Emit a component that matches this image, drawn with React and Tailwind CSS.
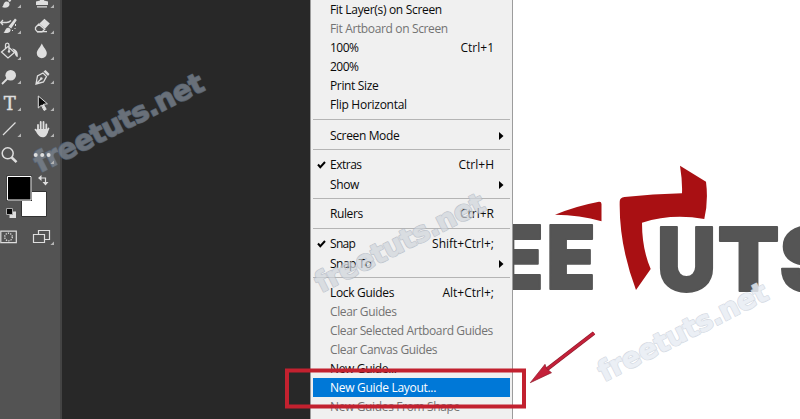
const INK = '#dedede';

function Tool({ box, corner, children }) {
  const [x, y, w, h] = box;
  return (
    <svg width={w} height={h} viewBox={`${x} ${y} ${w} ${h}`} fill={INK} className="block">
      {children}
      {corner && <path d={`M${corner[0]} ${corner[1]}v-3.6l-3.6 3.6z`} fill="#b5b5b5" />}
    </svg>
  );
}

function Toolbar() {
  return (
    <aside className="h-[419px] w-[62px] shrink-0 overflow-hidden border-r-2 border-[#444444] bg-[#535353]">
      <div className="-mt-3 grid grid-cols-[26px_34px]">
        <Tool box={[0, -12, 26, 26]} corner={[21, 8]}>
          <path d="M2 7c2-1 1-5 4.500-5.500 3 0 4 3 2 5C7 8 4 8 2 7zM8 1l4-6 2 1-4 6z" />
        </Tool>
        <Tool box={[26, -12, 34, 26]} corner={[54, 8]}>
          <path d="M36 5V1.500l4-1V-4h4v4.500l4 1V5zM37 6.200h10v1.300H37z" />
        </Tool>
        <Tool box={[0, 14, 26, 26]} corner={[21, 34]}>
          <path d="M3.500 32.500c2-1 1.500-4.500 4.500-4.800 2.500 0 3.500 2.700 1.700 4.200-1.700 1.400-4.200 1.400-6.200.6zM8.500 26.500l6.500-8 1.800 1.400-5.600 8.700z" />
          <path d="M1 22.500h5.500c2 0 3.500-1 4.500-2M3 20l-2.300 2.500L3 25" fill="none" stroke={INK} strokeWidth="1.300" />
          <path d="M15.500 24v2m-.5 2v1m-2 1.500h-1" stroke={INK} fill="none" />
        </Tool>
        <Tool box={[26, 14, 34, 26]} corner={[54, 34]}>
          <path d="M35.500 27.500l3.200-3.300 6 5-2.700 2.700h-4.500l-2-2.300z" fill="#535353" stroke={INK} strokeWidth="1.300" />
          <path d="M39.200 23.800l5.200-5 5.400 4.700-4.800 5.200zM37 31h10v1.200H37z" />
        </Tool>
        <Tool box={[0, 40, 26, 26]} corner={[21, 60]}>
          <path d="M1.500 52l6.500-5.500 6.500 6L8 58zM5.500 49v-4c0-2.500 3.500-2.500 3.500 0v6.500" fill="none" stroke={INK} strokeWidth="1.300" />
          <circle cx="9" cy="51.500" r="1.200" />
          <path d="M12 48.500c4 .5 6.500 3 5.700 8.500-3-.5-2.800-4.500-3.700-6z" />
        </Tool>
        <Tool box={[26, 40, 34, 26]} corner={[54, 60]}>
          <path d="M41.800 43.500c2 4.500 5 6.500 5 9.800a5 5 0 0 1-10 0c0-3.300 3-5.300 5-9.800z" />
        </Tool>
        <Tool box={[0, 66, 26, 26]} corner={[21, 84]}>
          <circle cx="10.700" cy="75.300" r="5.300" />
          <path d="M7.500 78.500L2 84" stroke={INK} strokeWidth="1.800" />
        </Tool>
        <Tool box={[26, 66, 34, 26]} corner={[54, 84]}>
          <path d="M36 84l1.500-8 5.500-3 3.500 3.500-3 5.500zM36 84l5-5" fill="none" stroke={INK} strokeWidth="1.300" />
          <circle cx="41.300" cy="78.500" r="1.300" />
          <path d="M43.500 71.500l2-1.500 4 4-1.500 2z" />
        </Tool>
        <Tool box={[0, 92, 26, 26]} corner={[21, 111]}>
          <text x="9.700" y="109.500" textAnchor="middle" fontSize="18" textLength="12" lengthAdjust="spacingAndGlyphs" fontFamily="DejaVu Serif, serif" stroke={INK} strokeWidth=".5">T</text>
        </Tool>
        <Tool box={[26, 92, 34, 26]} corner={[54, 111]}>
          <path d="M38.300 96v12l3-2.800 2.700 5.300 2.200-1.200-2.800-5 4-.5z" fill="#0c0c0c" stroke={INK} strokeWidth="1" />
          <path d="M41.600 105.200l2.500 5.300 2.200-1.200-2.700-5z" />
        </Tool>
        <Tool box={[0, 118, 26, 26]} corner={[21, 137]}>
          <path d="M3 135L15.500 122.500" stroke={INK} strokeWidth="1.300" />
        </Tool>
        <Tool box={[26, 118, 34, 26]} corner={[54, 137]}>
          <path d="M38 131v-6M40.700 130v-8M43.500 130v-8M46.300 131v-6.500M38.500 133l-3-3.300M46.500 133l2-4.500" stroke={INK} strokeWidth="1.800" strokeLinecap="round" />
          <path d="M37.200 129h10l1 2c-1 3-2 6-4.700 6.300-3.500.3-5-1.800-7-4.800z" />
        </Tool>
        <Tool box={[0, 144, 26, 26]}>
          <circle cx="7.700" cy="153.300" r="5.500" fill="none" stroke={INK} strokeWidth="1.500" />
          <path d="M11.700 157.500l4.800 4.700" stroke={INK} strokeWidth="2.500" />
        </Tool>
        <div className="relative z-10">
          <Tool box={[26, 144, 34, 26]} corner={[54, 164]}>
            <circle cx="35.700" cy="155" r="2" />
            <circle cx="42.200" cy="155" r="2" />
            <circle cx="48.600" cy="155" r="2" />
          </Tool>
        </div>
      </div>
      <Tool box={[0, 170, 60, 54]}>
        <path d="M21.500 191.500h25v25h-25z" fill="#ffffff" stroke="#333333" />
        <path d="M6.500 175.500h25.500v25.500H6.500z" fill="#303030" />
        <path d="M7.500 176.500h23.500v23.500H7.500z" fill="#000000" stroke="#ffffff" />
        <path d="M41 178h4.500v5" stroke={INK} strokeWidth="1.200" fill="none" />
        <path d="M41.500 175l-3.500 3 3.500 3zM42.500 182l3 3.500 3-3.500z" />
        <path d="M9.500 211.500h6.500v6.500H9.500z" />
        <path d="M6.500 208.500h6v6h-6z" fill="#080808" stroke="#aaaaaa" />
      </Tool>
      <div className="grid grid-cols-[26px_34px]">
        <Tool box={[0, 224, 26, 26]}>
          <path d="M.8 231.200h15.500v11.500H.8z" fill="none" stroke={INK} strokeWidth="1.200" />
          <circle cx="8.500" cy="237" r="3.800" fill="none" stroke={INK} strokeDasharray="1.300 1.100" strokeWidth="1.300" />
        </Tool>
        <Tool box={[26, 224, 34, 26]} corner={[54, 245]}>
          <path d="M38.500 230.500h11v9h-11z" fill="#535353" stroke={INK} strokeWidth="1.200" />
          <path d="M33.500 234.500h11v8h-11z" fill="#535353" stroke={INK} strokeWidth="1.200" />
        </Tool>
      </div>
    </aside>
  );
}

function Item({ label, keys, sub, checked, off, active, track = 'tracking-[-0.36px]' }) {
  const tone = active ? 'bg-[#0078d7] text-white' : off ? 'text-[#737373]' : 'text-[#0a0a0a]';
  return (
    <div className={`mx-[2px] flex h-[19px] items-center pr-[16px] leading-[19px] ${tone}`}>
      <span className="flex w-[17px] shrink-0 justify-center pr-[1px]">
        {checked && (
          <svg width="9" height="8" viewBox="0 0 9 8" fill="none" stroke="#000" strokeWidth="2">
            <path d="M1 3.500l2.300 2.700L8 1" />
          </svg>
        )}
      </span>
      <span className={`whitespace-nowrap ${track}`}>{label}</span>
      {keys && <span className="ml-auto">{keys}</span>}
      {sub && (
        <svg className="-mr-[10px] ml-auto" width="5" height="8" viewBox="0 0 5 8">
          <path d="M0 0l4.500 4L0 8z" />
        </svg>
      )}
    </div>
  );
}

function Rule({ space }) {
  return <div className={`mx-[2px] h-px bg-[#b4b4b4] ${space}`} />;
}

function Menu() {
  return (
    <nav className="h-[419px] w-[203px] shrink-0 overflow-hidden border-x border-[#9c9c9c] bg-[#f0f0f0] font-['Open_Sans','Noto_Sans',sans-serif] text-[12px]">
      <Item label="Fit Layer(s) on Screen" track="tracking-[-0.32px]" />
      <Item label="Fit Artboard on Screen" off />
      <Item label="100%" keys="Ctrl+1" track="tracking-[-0.5px]" />
      <Item label="200%" track="tracking-[-0.5px]" />
      <Item label="Print Size" />
      <Item label="Flip Horizontal" track="tracking-[-0.27px]" />
      <Rule space="mt-[5px] mb-[6px]" />
      <Item label="Screen Mode" sub />
      <Rule space="mt-[4px] mb-[5px]" />
      <Item label="Extras" keys="Ctrl+H" checked track="tracking-[-0.5px]" />
      <div className="h-px" />
      <Item label="Show" sub track="tracking-[-0.4px]" />
      <Rule space="mt-[4px] mb-[5px]" />
      <Item label="Rulers" keys="Ctrl+R" track="tracking-[-0.4px]" />
      <Rule space="mt-[5px] mb-[5px]" />
      <Item label="Snap" keys="Shift+Ctrl+;" checked track="tracking-[-0.7px]" />
      <div className="h-px" />
      <Item label="Snap To" sub track="tracking-[-0.5px]" />
      <Rule space="mt-[4px] mb-[5px]" />
      <Item label="Lock Guides" keys="Alt+Ctrl+;" track="tracking-[-0.32px]" />
      <Item label="Clear Guides" off />
      <Item label="Clear Selected Artboard Guides" off track="tracking-[-0.39px]" />
      <Item label="Clear Canvas Guides" off />
      <Item label="New Guide..." track="tracking-[-0.35px]" />
      <Item label="New Guide Layout..." active track="tracking-[-0.3px]" />
      <Item label="New Guides From Shape" off />
    </nav>
  );
}

function Logo() {
  return (
    <svg className="block" width="287" height="419" viewBox="513 0 287 419">
      <g fill="#555555" stroke="#555555" strokeWidth="2" strokeLinejoin="round" fontFamily="Inter, sans-serif" fontWeight="900" fontSize="88">
        <text x="493.500" y="289" textLength="50" lengthAdjust="spacingAndGlyphs">E</text>
        <text x="546.500" y="289" textLength="49" lengthAdjust="spacingAndGlyphs">E</text>
        <text x="657" y="290.500" textLength="59" lengthAdjust="spacingAndGlyphs">U</text>
        <text x="717.500" y="290.500" textLength="62" lengthAdjust="spacingAndGlyphs">T</text>
        <text x="779.500" y="290.500" textLength="60" lengthAdjust="spacingAndGlyphs">S</text>
      </g>
      <path d="M680 165.700L706 181.700Q708.500 201 704.300 219Q672 213 642 222.700Q642 249 650.700 269L636 290Q619 245 619.700 201.700Q619.700 197.500 624.500 197Q653 194 682 193.300Q682.500 181 680 165.700z" fill="#a91013" />
      <path d="M555 214.700Q576 206 599 201.700Q601.500 201.500 601.500 204V221.200Q580 215 555 214.700z" fill="#a91013" />
    </svg>
  );
}

function Watermark({ x, y, fill, edge, opacity }) {
  return (
    <g transform={`translate(${x} ${y}) rotate(-26.700)`} opacity={opacity} fontFamily="DejaVu Sans, sans-serif" fontWeight="700" fontSize="28" strokeLinejoin="round">
      <text fill={edge} stroke={edge} strokeWidth="1.800" textLength="186">freetuts.net</text>
      <text fill={fill} stroke={fill} strokeWidth=".5" textLength="186">freetuts.net</text>
    </g>
  );
}

function Marks() {
  return (
    <svg className="pointer-events-none absolute inset-0" width="800" height="419" viewBox="0 0 800 419">
      <Watermark x={40} y={173} fill="#7a838e" edge="#56667a" opacity=".8" />
      <Watermark x={321} y={293} fill="#d0d5dc" edge="#a9b1bc" opacity=".7" />
      <Watermark x={604} y={382} fill="#e8edf4" edge="#ccd2dc" opacity=".85" />
      <path d="M287 370.500h237v36H287z" fill="none" stroke="#c2212f" strokeWidth="4" />
      <path d="M594 333L546 370" stroke="#8f1c2c" strokeWidth="4" />
      <path d="M594 333L546 370" stroke="#c4213a" strokeWidth="2.600" />
      <path d="M530.300 382.700L545 364.300L546.500 368.500L551.500 372.700z" fill="#c4213a" stroke="#8f1c2c" strokeWidth=".7" />
    </svg>
  );
}

export default function App() {
  return (
    <main className="relative flex h-[419px] w-[800px] overflow-hidden bg-white">
      <Toolbar />
      <section className="w-[248px] shrink-0 bg-[#282828]" />
      <Menu />
      <Logo />
      <Marks />
    </main>
  );
}
